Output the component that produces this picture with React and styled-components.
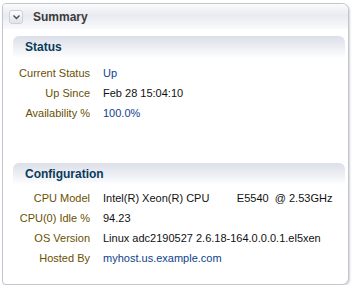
import React from "react";
import styled, { createGlobalStyle } from "styled-components";

const GlobalStyle = createGlobalStyle`
  html, body {
    margin: 0;
    padding: 0;
    background: #ffffff;
  }
  body {
    font-family: "Liberation Sans", Arial, sans-serif;
    font-size: 11px;
  }
`;

const Panel = styled.div`
  margin: 3px 0 0 2px;
  width: 347px;
  height: 282px;
  border: 1px solid #c3c6cf;
  border-radius: 4px 7px 7px 4px;
  box-shadow: 1px 1px 2px rgba(120, 125, 140, 0.35);
  box-sizing: border-box;
  background: #ffffff;
  overflow: hidden;
`;

const PanelHeader = styled.div`
  display: flex;
  align-items: center;
  gap: 10px;
  height: 25px;
  padding: 0 0 0 6px;
  background: linear-gradient(to bottom, #fbfbfd 0%, #e9eaf0 45%, #f3f4f7 80%, #fafafc 100%);
`;

const Toggle = styled.span`
  display: inline-flex;
  align-items: center;
  justify-content: center;
  width: 14px;
  height: 14px;
  border: 1px solid #cdd0d8;
  border-radius: 3px;
  background: linear-gradient(to bottom, #ffffff, #dfe2ea);
  box-sizing: border-box;
`;

const Title = styled.span`
  font-weight: bold;
  font-size: 12px;
  color: #3a3a3a;
`;

const Body = styled.div`
  padding: 7px 3px 0 10px;
`;

const Section = styled.section`
  margin-bottom: ${(p) => p.$gap || 0}px;
`;

const SectionHeader = styled.div`
  height: 22px;
  display: flex;
  align-items: center;
  padding-left: 12px;
  border-radius: 6px 6px 0 0;
  background: linear-gradient(to bottom, #dcdfe9 0%, #eceef3 50%, #ffffff 100%);
  font-weight: bold;
  font-size: 12px;
  color: #0b3b5a;
`;

const Rows = styled.div`
  display: grid;
  grid-template-columns: 77px 1fr;
  column-gap: 13px;
  padding-top: ${(p) => p.$pad}px;
`;

const Label = styled.div`
  height: 20px;
  line-height: 20px;
  text-align: right;
  color: #6a5000;
  white-space: nowrap;
`;

const Value = styled.div`
  height: 20px;
  line-height: 20px;
  color: ${(p) => (p.$link ? "#0e3f8c" : "#111111")};
  white-space: pre;
`;

const ChevronDown = () => (
  <svg width="9" height="6" viewBox="0 0 9 6">
    <path d="M1.5 1.5 L4.5 4.5 L7.5 1.5" fill="none" stroke="#4a4d57" strokeWidth="1.4" />
  </svg>
);

const status = [
  ["Current Status", "Up", true],
  ["Up Since", "Feb 28 15:04:10", false],
  ["Availability %", "100.0%", true],
];

const config = [
  ["CPU Model", "Intel(R) Xeon(R) CPU         E5540  @ 2.53GHz", false],
  ["CPU(0) Idle %", "94.23", false],
  ["OS Version", "Linux adc2190527 2.6.18-164.0.0.0.1.el5xen", false],
  ["Hosted By", "myhost.us.example.com", true],
];

const renderRows = (rows) =>
  rows.map(([label, value, link]) => (
    <React.Fragment key={label}>
      <Label>{label}</Label>
      <Value $link={link}>{value}</Value>
    </React.Fragment>
  ));

const App = () => (
  <>
    <GlobalStyle />
    <Panel>
      <PanelHeader>
        <Toggle>
          <ChevronDown />
        </Toggle>
        <Title>Summary</Title>
      </PanelHeader>
      <Body>
        <Section $gap={40}>
          <SectionHeader>Status</SectionHeader>
          <Rows $pad={5}>{renderRows(status)}</Rows>
        </Section>
        <Section>
          <SectionHeader>Configuration</SectionHeader>
          <Rows $pad={3}>{renderRows(config)}</Rows>
        </Section>
      </Body>
    </Panel>
  </>
);

export default App;
